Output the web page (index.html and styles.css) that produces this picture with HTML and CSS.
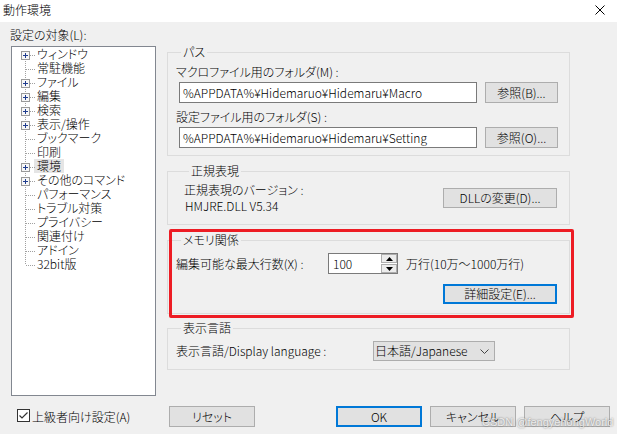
FILE: index.html
```html
<!DOCTYPE html>
<html lang="ja">
<head>
<meta charset="utf-8">
<title>動作環境</title>
<link rel="stylesheet" href="styles.css">
</head>
<body>
<div class="titlebar">
  <span class="title">動作環境</span>
  <svg class="close" width="10" height="10" viewBox="0 0 10 10"><path d="M0.5 0.5L9.5 9.5M9.5 0.5L0.5 9.5" stroke="#000" stroke-width="1" fill="none"/></svg>
</div>
<div class="main">
  <div class="left">
    <div class="tree-label">設定の対象(L):</div>
    <div class="tree">
      <div class="row first"><span class="branch"><svg class="pm" width="9" height="9" viewBox="0 0 9 9"><rect x="0.5" y="0.5" width="8" height="8" fill="#f7f7f7" stroke="#9a9a9a"/><path d="M2 4.5h5M4.5 2v5" stroke="#1f3c8e"/></svg></span><span class="lbl">ウィンドウ</span></div>
      <div class="row"><span class="branch"></span><span class="lbl">常駐機能</span></div>
      <div class="row"><span class="branch"><svg class="pm" width="9" height="9" viewBox="0 0 9 9"><rect x="0.5" y="0.5" width="8" height="8" fill="#f7f7f7" stroke="#9a9a9a"/><path d="M2 4.5h5M4.5 2v5" stroke="#1f3c8e"/></svg></span><span class="lbl">ファイル</span></div>
      <div class="row"><span class="branch"><svg class="pm" width="9" height="9" viewBox="0 0 9 9"><rect x="0.5" y="0.5" width="8" height="8" fill="#f7f7f7" stroke="#9a9a9a"/><path d="M2 4.5h5M4.5 2v5" stroke="#1f3c8e"/></svg></span><span class="lbl">編集</span></div>
      <div class="row"><span class="branch"><svg class="pm" width="9" height="9" viewBox="0 0 9 9"><rect x="0.5" y="0.5" width="8" height="8" fill="#f7f7f7" stroke="#9a9a9a"/><path d="M2 4.5h5M4.5 2v5" stroke="#1f3c8e"/></svg></span><span class="lbl">検索</span></div>
      <div class="row"><span class="branch"><svg class="pm" width="9" height="9" viewBox="0 0 9 9"><rect x="0.5" y="0.5" width="8" height="8" fill="#f7f7f7" stroke="#9a9a9a"/><path d="M2 4.5h5M4.5 2v5" stroke="#1f3c8e"/></svg></span><span class="lbl">表示/操作</span></div>
      <div class="row"><span class="branch"></span><span class="lbl">ブックマーク</span></div>
      <div class="row"><span class="branch"></span><span class="lbl">印刷</span></div>
      <div class="row"><span class="branch"><svg class="pm" width="9" height="9" viewBox="0 0 9 9"><rect x="0.5" y="0.5" width="8" height="8" fill="#f7f7f7" stroke="#9a9a9a"/><path d="M2 4.5h5M4.5 2v5" stroke="#1f3c8e"/></svg></span><span class="lbl selected">環境</span></div>
      <div class="row"><span class="branch"><svg class="pm" width="9" height="9" viewBox="0 0 9 9"><rect x="0.5" y="0.5" width="8" height="8" fill="#f7f7f7" stroke="#9a9a9a"/><path d="M2 4.5h5M4.5 2v5" stroke="#1f3c8e"/></svg></span><span class="lbl">その他のコマンド</span></div>
      <div class="row"><span class="branch"></span><span class="lbl">パフォーマンス</span></div>
      <div class="row"><span class="branch"></span><span class="lbl">トラブル対策</span></div>
      <div class="row"><span class="branch"></span><span class="lbl">プライバシー</span></div>
      <div class="row"><span class="branch"></span><span class="lbl">関連付け</span></div>
      <div class="row"><span class="branch"></span><span class="lbl">アドイン</span></div>
      <div class="row last"><span class="branch"></span><span class="lbl">32bit版</span></div>
    </div>
  </div>
  <div class="right">
    <div class="group g-path">
      <div class="legend">パス</div>
      <div class="flabel first-label">マクロファイル用のフォルダ(M) :</div>
      <div class="field-row">
        <div class="textbox">%APPDATA%¥Hidemaruo¥Hidemaru¥Macro</div>
        <div class="btn browse">参照(B)...</div>
      </div>
      <div class="flabel second-label">設定ファイル用のフォルダ(S) :</div>
      <div class="field-row">
        <div class="textbox">%APPDATA%¥Hidemaruo¥Hidemaru¥Setting</div>
        <div class="btn browse">参照(O)...</div>
      </div>
    </div>
    <div class="group g-regex">
      <div class="legend">正規表現</div>
      <div class="regex-row">
        <div class="regex-text">
          <div>正規表現のバージョン :</div>
          <div class="ver">HMJRE.DLL V5.34</div>
        </div>
        <div class="btn wide">DLLの変更(D)...</div>
      </div>
    </div>
    <div class="group g-mem">
      <div class="legend">メモリ関係</div>
      <div class="mem-row">
        <span class="mem-label">編集可能な最大行数(X) :</span>
        <div class="spin">
          <span class="spin-val">100</span>
          <span class="spin-btns">
            <span class="spin-btn"><svg width="7" height="4" viewBox="0 0 7 4"><path d="M3.5 0L7 4H0z" fill="#000"/></svg></span>
            <span class="spin-btn"><svg width="7" height="4" viewBox="0 0 7 4"><path d="M0 0H7L3.5 4z" fill="#000"/></svg></span>
          </span>
        </div>
        <span class="unit">万行(10万～1000万行)</span>
      </div>
      <div class="mem-btn-row">
        <div class="btn wide default">詳細設定(E)...</div>
      </div>
    </div>
    <div class="group g-lang">
      <div class="legend">表示言語</div>
      <div class="lang-row">
        <span class="lang-label">表示言語/Display language :</span>
        <div class="select">
          <span>日本語/Japanese</span>
          <svg width="9" height="5" viewBox="0 0 9 5"><path d="M0.5 0.5L4.5 4.5L8.5 0.5" stroke="#444" fill="none"/></svg>
        </div>
      </div>
    </div>
  </div>
</div>
<div class="bottom">
  <div class="chk">
    <span class="checkbox"><svg width="11" height="11" viewBox="0 0 11 11"><path d="M1.5 5.5L4 8L9.5 2.5" stroke="#333" stroke-width="1.2" fill="none"/></svg></span>
    <span class="chk-label">上級者向け設定(A)</span>
  </div>
  <div class="btn action">リセット</div>
  <div class="btn action default ok">OK</div>
  <div class="btn action">キャンセル</div>
  <div class="btn action">ヘルプ</div>
</div>
<div class="redbox"></div>
<div class="watermark">CSDN @fengyehongWorld</div>
</body>
</html>
```
FILE: styles.css
```css
html, body {
  margin: 0;
  padding: 0;
  background: #f0f0f0;
}
body {
  width: 617px;
  height: 434px;
  overflow: hidden;
  position: relative;
  font-family: "Noto Sans CJK JP", "Noto Sans", sans-serif;
  font-weight: 300;
  font-size: 12px;
  line-height: 14px;
  font-feature-settings: "palt";
  color: #000;
}

/* title bar */
.titlebar {
  height: 22px;
  background: #fff;
  display: flex;
  align-items: flex-start;
  justify-content: space-between;
  padding: 3px 12px 0 3px;
  box-sizing: border-box;
}
.close {
  margin-top: 2px;
}

/* main area */
.main {
  display: flex;
  padding-left: 10px;
}
.left {
  width: 146px;
  flex: none;
}
.tree-label {
  margin-top: 6px;
  height: 14px;
}
.tree {
  margin-top: 4px;
  margin-left: 1px;
  width: 145px;
  height: 350px;
  box-sizing: border-box;
  border: 1px solid #828790;
  background: #fff;
}
.row {
  display: flex;
  height: 14px;
  line-height: 14px;
}
.branch {
  position: relative;
  width: 22px;
  height: 14px;
  flex: none;
}
.branch::before {
  content: "";
  position: absolute;
  left: 13px;
  top: 0;
  bottom: 0;
  width: 1px;
  background: repeating-linear-gradient(to bottom, #a0a0a0 0 1px, transparent 1px 2px);
}
.first .branch::before {
  top: 8px;
}
.last .branch::before {
  bottom: 6px;
}
.branch::after {
  content: "";
  position: absolute;
  left: 14px;
  top: 8px;
  width: 9px;
  height: 1px;
  background: repeating-linear-gradient(to right, #a0a0a0 0 1px, transparent 1px 2px);
}
.pm {
  position: absolute;
  left: 9px;
  top: 4px;
  z-index: 1;
}
.lbl {
  padding: 0 3px;
  height: 14px;
  white-space: nowrap;
}
.lbl.selected {
  background: #e5e5e5;
}

/* right column */
.right {
  width: 403px;
  margin-left: 11px;
  padding-top: 30px;
  flex: none;
}
.group {
  border: 1px solid #dcdcdc;
}
.group + .group {
  margin-top: 15px;
}
.legend {
  display: block;
  width: max-content;
  margin: -8px 0 0 5px;
  padding: 0 2px;
  height: 14px;
  background: #f0f0f0;
}

/* path group */
.g-path {
  padding: 0 11px 7px 8px;
}
.flabel {
  height: 14px;
}
.first-label {
  margin-top: 6px;
}
.second-label {
  margin-top: 7px;
}
.field-row {
  display: flex;
  gap: 8px;
  margin: 3px 0 0 3px;
}
.textbox {
  width: 298px;
  height: 21px;
  box-sizing: border-box;
  border: 1px solid #7a7a7a;
  background: #fff;
  padding-left: 3px;
  line-height: 19px;
  white-space: nowrap;
  overflow: hidden;
}
.btn {
  height: 21px;
  box-sizing: border-box;
  border: 1px solid #adadad;
  background: #e1e1e1;
  display: flex;
  align-items: center;
  justify-content: center;
  white-space: nowrap;
}
.btn.default {
  border: 2px solid #0078d7;
}
.browse {
  width: 73px;
}
.wide {
  width: 114px;
  height: 20px;
}

/* regex group */
.g-regex {
  padding: 0 12px 11px 16px;
}
.regex-row {
  display: flex;
  align-items: center;
  justify-content: space-between;
  margin-top: 5px;
}
.ver {
  margin-top: 2px;
  padding-left: 1px;
}

/* memory group */
.g-mem {
  padding: 0 12px 9px 8px;
}
.mem-row {
  display: flex;
  align-items: center;
  margin-top: 6px;
  height: 21px;
}
.mem-label {
  width: 152px;
  flex: none;
}
.spin {
  display: flex;
  width: 70px;
  height: 21px;
  box-sizing: border-box;
  border: 1px solid #7a7a7a;
  background: #fff;
}
.spin-val {
  flex: 1;
  padding-left: 4px;
  line-height: 19px;
}
.spin-btns {
  display: flex;
  flex-direction: column;
  gap: 1px;
  width: 16px;
}
.spin-btn {
  flex: 1;
  border: 1px solid #adadad;
  background: #ececec;
  display: flex;
  align-items: center;
  justify-content: center;
}
.unit {
  margin-left: 8px;
}
.mem-btn-row {
  display: flex;
  justify-content: flex-end;
  margin-top: 10px;
}

/* language group */
.g-lang {
  padding: 0 12px 8px 8px;
}
.group.g-lang {
  margin-top: 14px;
}
.lang-row {
  display: flex;
  align-items: center;
  margin-top: 6px;
  height: 20px;
}
.lang-label {
  width: 197px;
  flex: none;
}
.select {
  width: 122px;
  height: 20px;
  box-sizing: border-box;
  border: 1px solid #adadad;
  background: #e1e1e1;
  display: flex;
  align-items: center;
  justify-content: space-between;
  padding: 0 5px 0 1px;
}

/* bottom bar */
.bottom {
  display: flex;
  align-items: center;
  height: 21px;
  margin-top: 10px;
  padding: 0 7px 0 17px;
  gap: 8px;
}
.chk {
  display: flex;
  align-items: center;
  width: 144px;
  flex: none;
}
.checkbox {
  width: 13px;
  height: 13px;
  box-sizing: border-box;
  border: 1px solid #333;
  background: #fff;
  display: flex;
  align-items: center;
  justify-content: center;
  margin-top: -2px;
}
.chk-label {
  margin-left: 2px;
  white-space: nowrap;
}
.action {
  width: 86px;
}
.ok {
  margin-left: auto;
}

/* annotation overlays */
.redbox {
  position: absolute;
  left: 169px;
  top: 229px;
  width: 405px;
  height: 89px;
  box-sizing: border-box;
  border: 3px solid #ed1c24;
  border-radius: 2px;
}
.watermark {
  position: absolute;
  left: 482px;
  top: 416px;
  font-family: "Liberation Sans", sans-serif;
  font-weight: 400;
  font-size: 11px;
  line-height: 13px;
  color: rgba(255, 255, 255, 0.8);
  text-shadow: 0 0 2px rgba(0, 0, 0, 0.55);
  white-space: nowrap;
  font-feature-settings: normal;
}
```
